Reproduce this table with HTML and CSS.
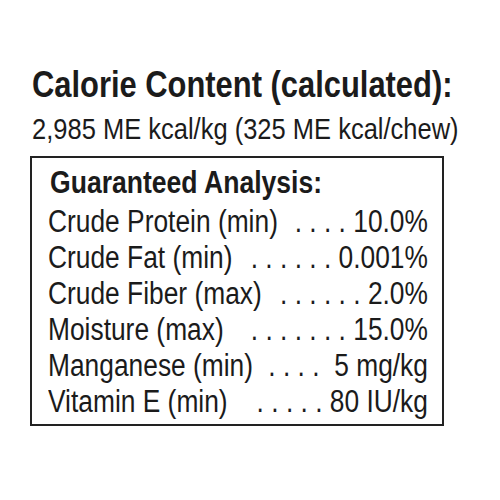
FILE: index.html
```html
<!DOCTYPE html>
<html>
<head>
<meta charset="utf-8">
<link rel="stylesheet" href="styles.css">
</head>
<body>
<main class="page">
  <h1 class="title">Calorie Content (calculated):</h1>
  <p class="calories">2,985 ME kcal/kg (325 ME kcal/chew)</p>
  <section class="box">
    <h2 class="box-title">Guaranteed Analysis:</h2>
    <div class="row"><span>Crude Protein (min)</span><span>. . . . 10.0%</span></div>
    <div class="row"><span>Crude Fat (min)</span><span>. . . . . . 0.001%</span></div>
    <div class="row"><span>Crude Fiber (max)</span><span>. . . . . . 2.0%</span></div>
    <div class="row"><span>Moisture (max)</span><span>. . . . . . . 15.0%</span></div>
    <div class="row"><span>Manganese (min)</span><span>. . . .&nbsp; 5 mg/kg</span></div>
    <div class="row"><span>Vitamin E (min)</span><span>. . . . . 80 IU/kg</span></div>
  </section>
</main>
</body>
</html>
```
FILE: styles.css
```css
html, body {
  margin: 0;
  padding: 0;
  background: #fff;
}
body {
  width: 500px;
  height: 500px;
  overflow: hidden;
  font-family: "Liberation Sans", Arial, sans-serif;
  color: #1b1b1b;
}
.page {
  padding: 65px 0 0 32px;
}
.title {
  margin: 0;
  width: 560px;
  white-space: nowrap;
  font-size: 36px;
  line-height: 40px;
  font-weight: bold;
  transform: scaleX(0.858);
  transform-origin: left center;
}
.calories {
  margin: 7px 0 0 0;
  width: 560px;
  white-space: nowrap;
  font-size: 30px;
  line-height: 34px;
  transform: scaleX(0.85);
  transform-origin: left center;
}
.box {
  box-sizing: border-box;
  margin: 10px 0 0 -2px;
  width: 414px;
  height: 270px;
  border: 2px solid #222;
  padding: 6px 0 0 16px;
}
.box-title {
  margin: 0 0 4px 2px;
  white-space: nowrap;
  font-size: 32px;
  line-height: 36px;
  font-weight: bold;
  transform: scaleX(0.83);
  transform-origin: left center;
}
.row {
  display: flex;
  justify-content: space-between;
  width: 447px;
  white-space: nowrap;
  font-size: 31px;
  line-height: 36px;
  transform: scaleX(0.85);
  transform-origin: left center;
}
```
